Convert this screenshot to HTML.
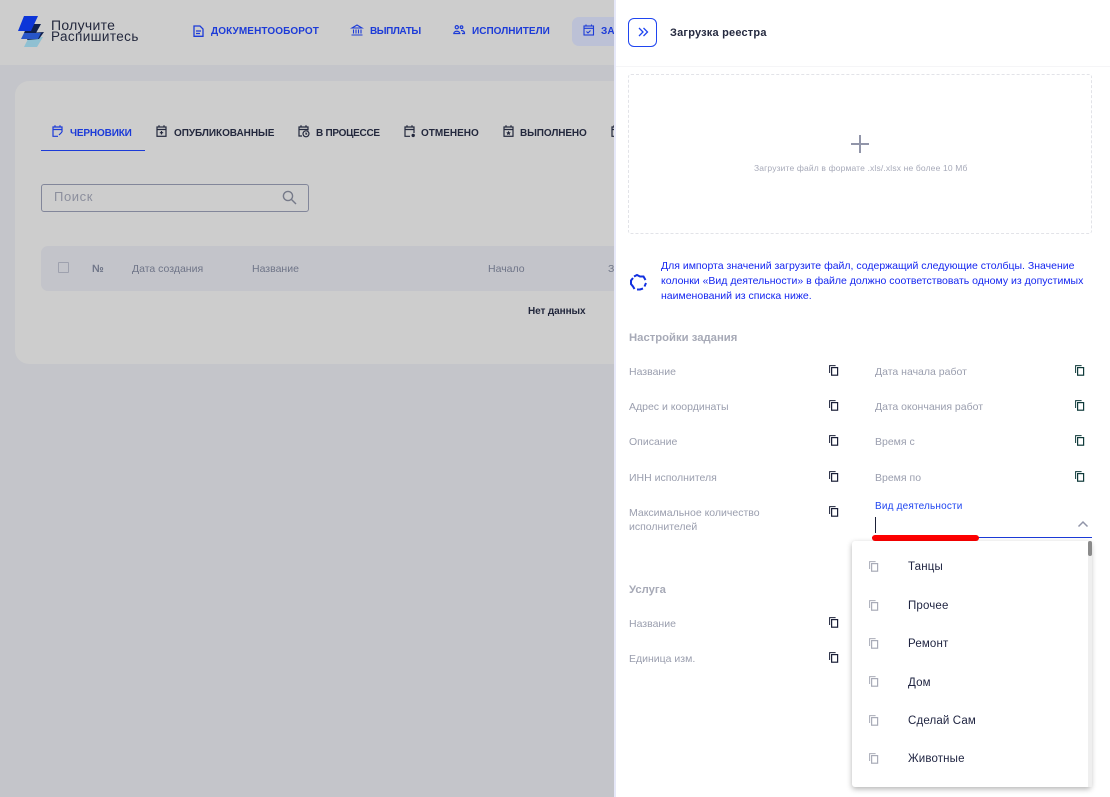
<!DOCTYPE html>
<html lang="ru"><head><meta charset="utf-8">
<style>
html,body{margin:0;padding:0}
body{width:1110px;height:797px;overflow:hidden;position:relative;background:#c4c5ca;font-family:"Liberation Sans",sans-serif}
.a{position:absolute}
.t{position:absolute;white-space:nowrap;line-height:16px}
.nav{font-size:10px;font-weight:700;color:#1c3bd8;letter-spacing:.1px}
.tab{font-size:10px;font-weight:700;color:#23283d}
.th{font-size:10.5px;color:#6f7588}
.lb{font-size:10.5px;color:#9a9eae}
.h{font-size:11.3px;font-weight:700;color:#a7aab7}
.it{font-size:11.5px;color:#1e2340;letter-spacing:.15px}
svg{position:absolute;overflow:visible}
</style></head><body>
<div class="a" style="left:0;top:0;width:615px;height:65px;background:#cdcdcd"></div>
<div class="a" style="left:15px;top:81px;width:600px;height:283px;background:#cdcdcd;border-radius:14px 0 0 14px"></div>

<!-- logo -->
<svg style="left:0;top:0" width="60" height="60" viewBox="0 0 60 60">
<path d="M29 37h14l-6 10H24z" fill="#8fc0d2"/>
<path d="M30 33l14-1-5 7-12 1z" fill="#10214f"/>
<path d="M24 33h17l-3 6H21z" fill="#2856c8"/>
<path d="M28 24h13l-5 9H24z" fill="#10204e"/>
<path d="M24 16h14l-7 15H18z" fill="#0c35d8"/>
</svg>
<div class="t" style="left:51px;top:17px;font-size:14px;color:#23283d;letter-spacing:.3px">Получите</div>
<div class="t" style="left:51px;top:29px;font-size:13.5px;color:#23283d;letter-spacing:.4px">Распишитесь</div>

<!-- nav -->
<svg style="left:193px;top:25px" width="11" height="12" viewBox="0 0 11 12" fill="none" stroke="#1c3bd8" stroke-width="1.3"><path d="M1 1h6l3 3v7.300H1z"/><path d="M3 6h5M3 8.500h4"/></svg>
<div class="t nav" style="left:211px;top:24px">ДОКУМЕНТООБОРОТ</div>
<svg style="left:351px;top:24px" width="12" height="12" viewBox="0 0 12 12" fill="none" stroke="#1c3bd8" stroke-width="1.1"><path d="M1 4L6 1l5 3zM2.500 5.500v4M5 5.500v4M7.500 5.500v4M10 5.500v4M.5 11h11"/></svg>
<div class="t nav" style="left:370px;top:24px;letter-spacing:-.45px">ВЫПЛАТЫ</div>
<svg style="left:453px;top:25px" width="12" height="10" viewBox="0 0 12 10" fill="none" stroke="#1c3bd8" stroke-width="1.2"><circle cx="3.800" cy="2.200" r="1.600"/><circle cx="8.500" cy="2.200" r="1.300"/><path d="M.8 8.500c0-3 6-3 6 0zM8 5.500c2 0 3.500 1 3.500 3H9"/></svg>
<div class="t nav" style="left:472px;top:24px;letter-spacing:.03px">ИСПОЛНИТЕЛИ</div>
<div class="a" style="left:572px;top:17px;width:43px;height:29px;background:#bcc1d6;border-radius:7px 0 0 7px"></div>
<svg style="left:583px;top:24px" width="12" height="12" viewBox="0 0 12 12" fill="none" stroke="#1c3bd8" stroke-width="1.1"><rect x="1" y="2" width="9.500" height="9"/><path d="M1 4.300h9.500M3 .5v2M8.500 .5v2M3.500 7.500l1.500 1.500 2.500-2.500"/></svg>
<div class="t nav" style="left:601px;top:24px;width:14px;overflow:hidden">ЗАДАНИЯ</div>

<!-- tabs -->
<svg style="left:52px;top:125px" width="11" height="12" viewBox="0 0 11 12" fill="none" stroke="#1c3bd8" stroke-width="1.200"><path d="M10 7V2H1v9.300h5M1 4.500h9M3 .3v2M8 .3v2M7 10l3-3"/></svg>
<div class="t tab" style="left:70px;top:126px;color:#1c3bd8;letter-spacing:-.15px">ЧЕРНОВИКИ</div>
<div class="a" style="left:41px;top:150px;width:104px;height:1px;background:#1c3bd8"></div>
<svg style="left:156px;top:125px" width="11" height="12" viewBox="0 0 11 12" fill="none" stroke="#23283d" stroke-width="1.200"><rect x="1" y="2" width="9" height="9.300"/><path d="M1 4.500h9M3 .3v2M8 .3v2M5.500 6v3.500M3.800 7.700h3.400"/></svg>
<div class="t tab" style="left:174px;top:126px;letter-spacing:-.05px">ОПУБЛИКОВАННЫЕ</div>
<svg style="left:298px;top:125px" width="12" height="13" viewBox="0 0 12 13" fill="none" stroke="#23283d" stroke-width="1.200"><path d="M4 11H1V2h9v3.500M1 4.500h9M3 .3v2M8 .3v2"/><circle cx="8" cy="8.800" r="3"/><path d="M8 7.500v1.500h1.200"/></svg>
<div class="t tab" style="left:316px;top:126px;letter-spacing:-.28px">В ПРОЦЕССЕ</div>
<svg style="left:404px;top:125px" width="12" height="13" viewBox="0 0 12 13" fill="none" stroke="#23283d" stroke-width="1.200"><path d="M6 11.300H1V2h9v6M1 4.500h9M3 .3v2M8 .3v2"/><circle cx="9.200" cy="10.400" r="1.700" fill="#23283d" stroke="none"/></svg>
<div class="t tab" style="left:421px;top:126px">ОТМЕНЕНО</div>
<svg style="left:503px;top:125px" width="11" height="12" viewBox="0 0 11 12" fill="none" stroke="#23283d" stroke-width="1.200"><rect x="1" y="2" width="9" height="9.300"/><path d="M1 4.500h9M3 .3v2M8 .3v2"/><path d="M5.500 5.800l.8 1.500 1.500.2-1.100 1 .3 1.500-1.500-.8-1.500.8.300-1.500-1.100-1 1.500-.2z" fill="#23283d" stroke="none"/></svg>
<div class="t tab" style="left:520px;top:126px;letter-spacing:-.1px">ВЫПОЛНЕНО</div>
<svg style="left:611px;top:125px" width="4" height="12" viewBox="0 0 4 12" fill="none" stroke="#23283d" stroke-width="1.200"><path d="M4 2H1v9.300h3M1 4.500h3M3 .3v2"/></svg>

<!-- search -->
<div class="a" style="left:41px;top:184px;width:266px;height:26px;border:1px solid #82869a;border-radius:3px"></div>
<div class="t" style="left:54px;top:189px;font-size:13px;color:#8c8f9d;letter-spacing:.6px">Поиск</div>
<svg style="left:282px;top:190px" width="15" height="15" viewBox="0 0 15 15" fill="none" stroke="#767a89" stroke-width="1.400"><circle cx="6" cy="6" r="4.600"/><path d="M9.500 9.500l4.500 4.500"/></svg>

<!-- table head -->
<div class="a" style="left:41px;top:246px;width:574px;height:45px;background:#c3c4ca;border-radius:7px 0 0 7px"></div>
<div class="a" style="left:58px;top:262px;width:9px;height:9px;border:1.500px solid #9ea1ae;border-radius:1px"></div>
<div class="t th" style="left:92px;top:261px;font-weight:700">№</div>
<div class="t th" style="left:132px;top:261px">Дата создания</div>
<div class="t th" style="left:252px;top:261px">Название</div>
<div class="t th" style="left:488px;top:261px">Начало</div>
<div class="t th" style="left:608px;top:261px;width:6px;overflow:hidden">Завершение</div>
<div class="t" style="left:528px;top:304px;font-size:10px;font-weight:700;color:#23283d;letter-spacing:-.1px">Нет данных</div>

<!-- drawer -->
<div class="a" style="left:614px;top:0;width:496px;height:797px;background:#fff"></div>
<div class="a" style="left:614px;top:0;width:2px;height:797px;background:#e6e8f8"></div>
<div class="a" style="left:628px;top:18px;width:27px;height:27px;border:1.200px solid #1f45f0;border-radius:6px"></div>
<svg style="left:638px;top:27px" width="11" height="10" viewBox="0 0 11 10" fill="none" stroke="#1f45f0" stroke-width="1.300"><path d="M1 1l4 4-4 4M5.500 1l4 4-4 4"/></svg>
<div class="t" style="left:670px;top:25px;font-size:11px;font-weight:700;color:#252a40;letter-spacing:.2px">Загрузка реестра</div>
<div class="a" style="left:616px;top:66px;width:494px;height:1px;background:#f5f5f7"></div>

<div class="a" style="left:628px;top:74px;width:462px;height:158px;border:1px dashed #e2e3e8;border-radius:3px"></div>
<svg style="left:851px;top:135px" width="18" height="18" viewBox="0 0 18 18" stroke="#9195a9" stroke-width="2"><path d="M9 0v18M0 9h18"/></svg>
<div class="t" style="left:754px;top:160px;font-size:8.500px;color:#a7aab9;letter-spacing:.15px">Загрузите файл в формате .xls/.xlsx не более 10 Мб</div>

<svg style="left:630px;top:274px" width="17" height="17" viewBox="0 0 17 17" fill="none" stroke="#1230e0" stroke-width="2"><path d="M4 2.500L7 1l3 1.500h3.500L15.500 6M16 9l-1.500 3.500M13 14.500l-3 1H7M4.500 15L3 12.500 1 10V6.500L3 4"/></svg>
<div class="t" style="left:661px;top:258px;font-size:10.500px;color:#1426f0">Для импорта значений загрузите файл, содержащий следующие столбцы. Значение</div>
<div class="t" style="left:661px;top:273px;font-size:10.500px;color:#1426f0">колонки «Вид деятельности» в файле должно соответствовать одному из допустимых</div>
<div class="t" style="left:661px;top:288px;font-size:10.500px;color:#1426f0">наименований из списка ниже.</div>

<div class="t h" style="left:629px;top:330px">Настройки задания</div>
<div class="t lb" style="left:629px;top:364px">Название</div>
<div class="t lb" style="left:629px;top:399px">Адрес и координаты</div>
<div class="t lb" style="left:629px;top:434px">Описание</div>
<div class="t lb" style="left:629px;top:470px">ИНН исполнителя</div>
<div class="t lb" style="left:629px;top:505px">Максимальное количество</div>
<div class="t lb" style="left:629px;top:519px">исполнителей</div>
<div class="t lb" style="left:875px;top:364px">Дата начала работ</div>
<div class="t lb" style="left:875px;top:399px">Дата окончания работ</div>
<div class="t lb" style="left:875px;top:434px">Время с</div>
<div class="t lb" style="left:875px;top:470px">Время по</div>
<div class="t h" style="left:629px;top:582px">Услуга</div>
<div class="t lb" style="left:629px;top:616px">Название</div>
<div class="t lb" style="left:629px;top:651px">Единица изм.</div>

<!-- copy icons -->
<svg width="0" height="0" style="left:0;top:0"><defs><g id="c" fill="none"><path d="M.6 8V.6h6" stroke-width="1"/><rect x="2.600" y="2.600" width="6" height="7.600" stroke-width="1.200"/></g></defs></svg>
<svg style="left:829px;top:365px" width="9" height="11" stroke="#1b2038"><use href="#c"/></svg>
<svg style="left:829px;top:400px" width="9" height="11" stroke="#1b2038"><use href="#c"/></svg>
<svg style="left:829px;top:435px" width="9" height="11" stroke="#1b2038"><use href="#c"/></svg>
<svg style="left:829px;top:471px" width="9" height="11" stroke="#1b2038"><use href="#c"/></svg>
<svg style="left:829px;top:506px" width="9" height="11" stroke="#1b2038"><use href="#c"/></svg>
<svg style="left:829px;top:617px" width="9" height="11" stroke="#1b2038"><use href="#c"/></svg>
<svg style="left:829px;top:652px" width="9" height="11" stroke="#1b2038"><use href="#c"/></svg>
<svg style="left:1075px;top:365px" width="9" height="11" stroke="#0f3a3a"><use href="#c"/></svg>
<svg style="left:1075px;top:400px" width="9" height="11" stroke="#0f3a3a"><use href="#c"/></svg>
<svg style="left:1075px;top:435px" width="9" height="11" stroke="#0f3a3a"><use href="#c"/></svg>
<svg style="left:1075px;top:471px" width="9" height="11" stroke="#0f3a3a"><use href="#c"/></svg>

<!-- select -->
<div class="t" style="left:875px;top:499px;font-size:10px;color:#1f45f0;letter-spacing:.18px">Вид деятельности</div>
<div class="a" style="left:875px;top:517px;width:1px;height:16px;background:#1b2038"></div>
<svg style="left:1078px;top:521px" width="10" height="6" viewBox="0 0 10 6" fill="none" stroke="#9195a9" stroke-width="1.500"><path d="M.5 5.500L5 1l4.500 4.500"/></svg>
<div class="a" style="left:872px;top:537px;width:220px;height:1px;background:#1c3bd8"></div>
<div class="a" style="left:872px;top:535px;width:107px;height:6px;background:#fe0000;border-radius:3px"></div>

<!-- dropdown -->
<div class="a" style="left:852px;top:541px;width:239px;height:246px;background:#fff;border-radius:3px;box-shadow:0 2px 6px rgba(0,0,0,.3)"></div>
<div class="a" style="left:1088px;top:541px;width:4px;height:246px;background:#efefef"></div>
<div class="a" style="left:1088px;top:541px;width:4px;height:15px;background:#8a8a8a;border-radius:2px"></div>
<svg style="left:869px;top:561px" width="9" height="11" stroke="#a9acb8"><use href="#c"/></svg>
<svg style="left:869px;top:600px" width="9" height="11" stroke="#a9acb8"><use href="#c"/></svg>
<svg style="left:869px;top:638px" width="9" height="11" stroke="#a9acb8"><use href="#c"/></svg>
<svg style="left:869px;top:676px" width="9" height="11" stroke="#a9acb8"><use href="#c"/></svg>
<svg style="left:869px;top:715px" width="9" height="11" stroke="#a9acb8"><use href="#c"/></svg>
<svg style="left:869px;top:753px" width="9" height="11" stroke="#a9acb8"><use href="#c"/></svg>
<div class="t it" style="left:908px;top:559px">Танцы</div>
<div class="t it" style="left:908px;top:598px">Прочее</div>
<div class="t it" style="left:908px;top:636px">Ремонт</div>
<div class="t it" style="left:908px;top:675px">Дом</div>
<div class="t it" style="left:908px;top:713px">Сделай Сам</div>
<div class="t it" style="left:908px;top:751px">Животные</div>
</body></html>
